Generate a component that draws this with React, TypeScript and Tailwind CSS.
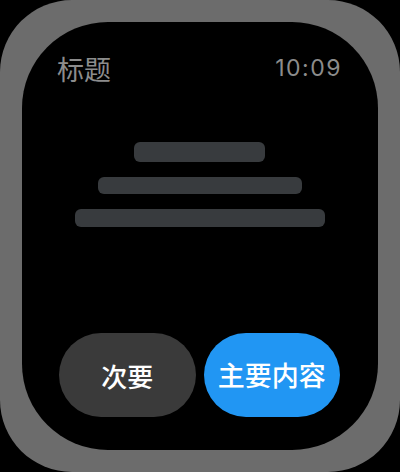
import React from 'react';

const cjk = { fontFamily: '"Noto Sans CJK SC", "Noto Sans", sans-serif' };

function Bar({ width, height }: { width: string; height: string }) {
  return <div className={`${width} ${height} rounded-[6px] bg-[#383b3e] blur-[0.4px]`} />;
}

export default function App() {
  return (
    <div className="w-[400px] h-[472px] bg-black">
      <div className="w-full h-full rounded-[72px] bg-[#6c6c6c] p-[22px]">
        <div className="w-full h-full rounded-[86px] bg-black flex flex-col pl-[35px] pr-[38px] pt-[33px] pb-[33px]">
          {/* Header */}
          <div className="flex items-center justify-between h-[27px]">
            <span className="text-[27px] leading-none text-[#8c8c8c]" style={cjk}>
              标题
            </span>
            <span className="text-[23px] leading-none text-[#8c8c8c] tracking-[1.5px] mr-[-2px] font-['Inter',sans-serif]">
              10:09
            </span>
          </div>

          {/* Content placeholders */}
          <div className="mt-[60px] flex flex-col items-center gap-[15px] ml-[2px]">
            <Bar width="w-[131px]" height="h-[20px]" />
            <Bar width="w-[204px]" height="h-[17px]" />
            <Bar width="w-[250px]" height="h-[18px]" />
          </div>

          {/* Actions */}
          <div className="mt-auto flex justify-center gap-[8px] ml-[2px]">
            <button className="w-[138px] h-[84px] rounded-[42px] bg-[#3a3a3a] text-white text-[26px] font-medium flex items-center justify-center" style={cjk}>
              次要
            </button>
            <button className="w-[138px] h-[84px] rounded-[42px] bg-[#2196f3] text-white text-[27px] font-medium flex items-center justify-center" style={cjk}>
              主要内容
            </button>
          </div>
        </div>
      </div>
    </div>
  );
}
